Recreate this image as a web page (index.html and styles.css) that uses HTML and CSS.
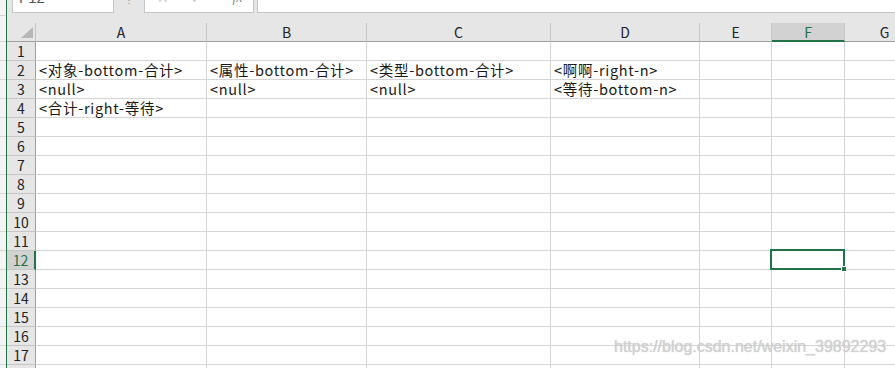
FILE: index.html
```html
<!DOCTYPE html>
<html lang="zh-CN">
<head>
    <meta charset="UTF-8">
    <title>Sheet1</title>
    <link rel="stylesheet" href="styles.css">
</head>
<body>
    <div class="app">
        <div class="edge"></div>
        <div class="main">
            <div class="formula">
                <div class="namebox"><span>F12</span></div>
                <div class="dots">⋮</div>
                <div class="fxbox">
                    <span class="ico">✕</span>
                    <span class="ico">✓</span>
                    <span class="ico fx">fx</span>
                </div>
                <div class="input"></div>
            </div>
            <div class="sheet">
                <div class="corner"><div class="tri"></div></div>
                <div class="colh">A</div>
                <div class="colh">B</div>
                <div class="colh">C</div>
                <div class="colh">D</div>
                <div class="colh">E</div>
                <div class="colh on">F</div>
                <div class="colh">G</div>

                <div class="rowh">1</div><div class="c"></div><div class="c"></div><div class="c"></div><div class="c"></div><div class="c"></div><div class="c"></div><div class="c"></div>
                <div class="rowh">2</div><div class="c">&lt;对象-bottom-合计&gt;</div><div class="c">&lt;属性-bottom-合计&gt;</div><div class="c">&lt;类型-bottom-合计&gt;</div><div class="c">&lt;啊啊-right-n&gt;</div><div class="c"></div><div class="c"></div><div class="c"></div>
                <div class="rowh">3</div><div class="c">&lt;null&gt;</div><div class="c">&lt;null&gt;</div><div class="c">&lt;null&gt;</div><div class="c">&lt;等待-bottom-n&gt;</div><div class="c"></div><div class="c"></div><div class="c"></div>
                <div class="rowh">4</div><div class="c">&lt;合计-right-等待&gt;</div><div class="c"></div><div class="c"></div><div class="c"></div><div class="c"></div><div class="c"></div><div class="c"></div>
                <div class="rowh">5</div><div class="c"></div><div class="c"></div><div class="c"></div><div class="c"></div><div class="c"></div><div class="c"></div><div class="c"></div>
                <div class="rowh">6</div><div class="c"></div><div class="c"></div><div class="c"></div><div class="c"></div><div class="c"></div><div class="c"></div><div class="c"></div>
                <div class="rowh">7</div><div class="c"></div><div class="c"></div><div class="c"></div><div class="c"></div><div class="c"></div><div class="c"></div><div class="c"></div>
                <div class="rowh">8</div><div class="c"></div><div class="c"></div><div class="c"></div><div class="c"></div><div class="c"></div><div class="c"></div><div class="c"></div>
                <div class="rowh">9</div><div class="c"></div><div class="c"></div><div class="c"></div><div class="c"></div><div class="c"></div><div class="c"></div><div class="c"></div>
                <div class="rowh">10</div><div class="c"></div><div class="c"></div><div class="c"></div><div class="c"></div><div class="c"></div><div class="c"></div><div class="c"></div>
                <div class="rowh">11</div><div class="c"></div><div class="c"></div><div class="c"></div><div class="c"></div><div class="c"></div><div class="c"></div><div class="c"></div>
                <div class="rowh on">12</div><div class="c"></div><div class="c"></div><div class="c"></div><div class="c"></div><div class="c"></div><div class="c sel"><div class="selbox"><div class="handle"></div></div></div><div class="c"></div>
                <div class="rowh">13</div><div class="c"></div><div class="c"></div><div class="c"></div><div class="c"></div><div class="c"></div><div class="c"></div><div class="c"></div>
                <div class="rowh">14</div><div class="c"></div><div class="c"></div><div class="c"></div><div class="c"></div><div class="c"></div><div class="c"></div><div class="c"></div>
                <div class="rowh">15</div><div class="c"></div><div class="c"></div><div class="c"></div><div class="c"></div><div class="c"></div><div class="c"></div><div class="c"></div>
                <div class="rowh">16</div><div class="c"></div><div class="c"></div><div class="c"></div><div class="c"></div><div class="c"></div><div class="c"></div><div class="c"></div>
                <div class="rowh">17</div><div class="c"></div><div class="c"></div><div class="c"></div><div class="c"></div><div class="c"></div><div class="c"></div><div class="c"></div>
                <div class="rowh">18</div><div class="c"></div><div class="c"></div><div class="c"></div><div class="c"></div><div class="c"></div><div class="c"></div><div class="c"></div>
            </div>
            <div class="mark">https://blog.csdn.net/weixin_39892293</div>
        </div>
    </div>
</body>
</html>
```

FILE: styles.css
```css
*{
    box-sizing: border-box;
}

body{
    margin: 0;
    overflow: hidden;
    background-color: #fff;
    font-family: "Noto Sans CJK SC", sans-serif;
}

.app{
    display: flex;
    height: 368px;
    overflow: hidden;
}

.edge{
    width: 7px;
    flex: none;
    border-right: 1px solid #217346;
    background: #f4f4f4 repeating-linear-gradient(to bottom, transparent 0, transparent 18px, #d6d6d6 18px, #d6d6d6 19px);
    background-position: 0 23px;
}

.main{
    position: relative;
    flex: 1;
    overflow: hidden;
}

/* formula bar */
.formula{
    display: flex;
    align-items: flex-start;
    height: 23px;
    background-color: #e6e6e6;
}

.namebox{
    margin-left: 5px;
    width: 102px;
    height: 13px;
    background-color: #fff;
    border: 1px solid #c6c6c6;
    border-top: none;
    overflow: hidden;
}

.namebox span{
    display: block;
    margin-top: -10px;
    padding-left: 6px;
    font-family: "Liberation Sans", sans-serif;
    font-size: 15px;
    line-height: 16px;
    color: #555;
}

.dots{
    width: 30px;
    text-align: center;
    font-size: 10px;
    line-height: 6px;
    height: 6px;
    overflow: hidden;
    color: #9a9a9a;
}

.fxbox{
    display: flex;
    width: 110px;
    height: 13px;
    background-color: #fff;
    border: 1px solid #c6c6c6;
    border-top: none;
    overflow: hidden;
    padding-left: 12px;
    gap: 22px;
}

.ico{
    display: block;
    margin-top: -10px;
    font-family: "DejaVu Sans", sans-serif;
    font-size: 14px;
    line-height: 16px;
    color: #c8c8c8;
}

.fx{
    margin-left: 8px;
    font-style: italic;
    font-family: "Liberation Serif", serif;
    color: #8a8a8a;
}

.input{
    flex: 1;
    margin-left: 3px;
    height: 13px;
    background-color: #fff;
    border: 1px solid #c6c6c6;
    border-top: none;
    border-right: none;
}

/* grid */
.sheet{
    display: grid;
    grid-template-columns: 29px 171px 160px 184px 149px 72px 73px 80px;
    grid-template-rows: 19px;
    grid-auto-rows: 19px;
    font-size: 14.5px;
    color: #1a1a1a;
}

.corner{
    background-color: #e6e6e6;
    border-right: 1px solid #c6c6c6;
    border-bottom: 1px solid #9f9f9f;
    padding: 4px 0 0 14px;
}

.tri{
    width: 0;
    height: 0;
    border-left: 12px solid transparent;
    border-bottom: 11px solid #b7b7b7;
}

.colh{
    background-color: #e6e6e6;
    border-right: 1px solid #c6c6c6;
    border-bottom: 1px solid #9f9f9f;
    text-align: center;
    line-height: 18px;
    font-size: 14px;
    color: #222;
}

.colh.on{
    background-color: #d2d2d2;
    border-bottom: 2px solid #217346;
    color: #217346;
}

.rowh{
    background-color: #e6e6e6;
    border-right: 1px solid #9f9f9f;
    border-bottom: 1px solid #c6c6c6;
    text-align: center;
    line-height: 19px;
    font-size: 14px;
    color: #222;
}

.rowh.on{
    background-color: #d2d2d2;
    border-right: 2px solid #217346;
    color: #217346;
}

.c{
    border-right: 1px solid #d4d4d4;
    border-bottom: 1px solid #d4d4d4;
    padding-left: 3px;
    line-height: 18px;
    letter-spacing: 0.7px;
    white-space: nowrap;
}

.sel{
    position: relative;
}

.selbox{
    position: absolute;
    top: -2px;
    left: -2px;
    right: -1px;
    bottom: -1px;
    border: 2px solid #217346;
}

.handle{
    position: absolute;
    right: -4px;
    bottom: -4px;
    width: 6px;
    height: 6px;
    background-color: #217346;
    border: 1px solid #fff;
}

.mark{
    position: absolute;
    left: 607px;
    top: 338px;
    font-family: "Liberation Sans", sans-serif;
    font-size: 16px;
    color: #d2d2d2;
    text-shadow: 0 0 1px #c4c4c4;
}
```
